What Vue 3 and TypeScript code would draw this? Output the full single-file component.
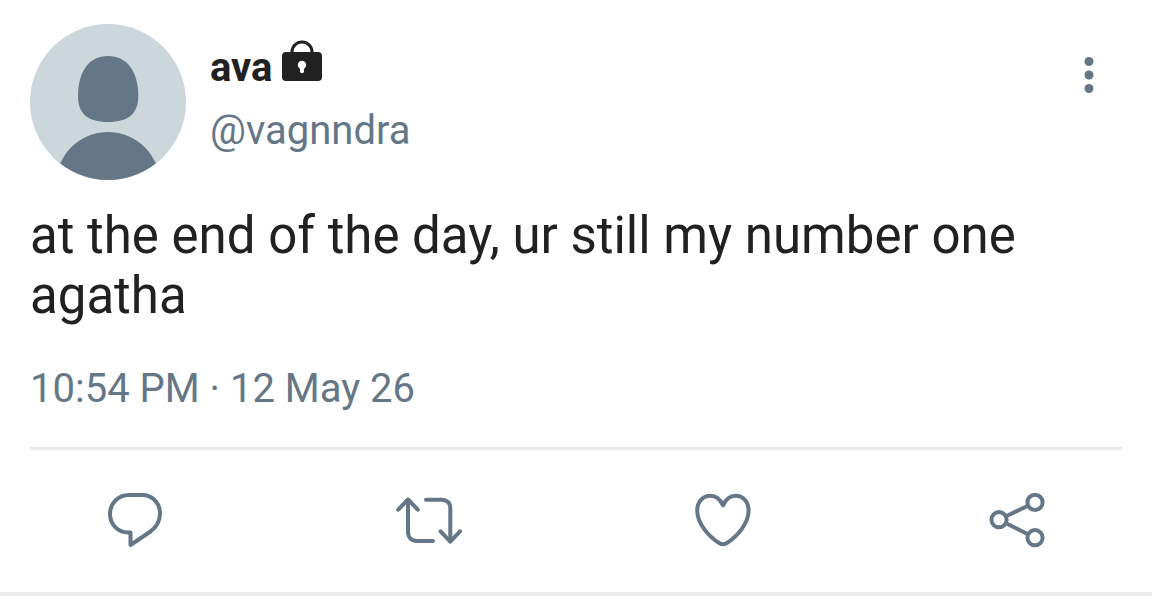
<script setup lang="ts">
interface Action {
  label: string
  paths: string[]
  circles?: { cx: number; cy: number; r: number }[]
}

const tweet = {
  name: 'ava',
  handle: '@vagnndra',
  text: 'at the end of the day, ur still my number one agatha',
  date: '10:54 PM · 12 May 26',
}

const actions: Action[] = [
  {
    label: 'Reply',
    paths: ['M27 8H40C50.500 8 58 16 58 26.500C58 34 54.500 40 48.500 44.500L28.500 58V45.500H26C16 45.500 8 37.500 8 27C8 16.500 16 8 27 8Z'],
  },
  {
    label: 'Retweet',
    paths: [
      'M2.200 22.700L12 12.500L21.800 22.700',
      'M12 13V45C12 50.500 15.500 54 21 54H37',
      'M30 12.700H45.500C51 12.700 54.300 16 54.300 21.500V54',
      'M44.600 44.300L54.300 54.600L64 44.300',
    ],
  },
  {
    label: 'Like',
    paths: ['M33 18.300C30 12 26 8.800 20.500 8.800C12.500 8.800 7.200 15 7.200 23.500C7.200 36 18 49 29.500 56.300Q33 58.300 36.500 56.300C48 49 58.600 36 58.600 23.500C58.600 15 53.300 8.800 45.500 8.800C40 8.800 36 12 33 18.300Z'],
  },
  {
    label: 'Share',
    paths: ['M22 29.300L44 18.700', 'M22 36.200L44 47.200'],
    circles: [
      { cx: 15, cy: 32.7, r: 7.6 },
      { cx: 51, cy: 15.4, r: 7.6 },
      { cx: 51, cy: 50.7, r: 7.6 },
    ],
  },
]
</script>

<template>
  <article class="tweet">
    <header class="head">
      <svg class="avatar" viewBox="0 0 156 156" role="img" aria-label="Default avatar">
        <defs>
          <clipPath id="disc"><circle cx="78" cy="78" r="78" /></clipPath>
        </defs>
        <g clip-path="url(#disc)">
          <rect width="156" height="156" fill="#ccd7db" />
          <path
            d="M78 32C98 32 108.300 49 108.300 72C108.300 89 99 98 78 98C57 98 48 89 48 72C48 49 58 32 78 32Z"
            fill="#657786"
          />
          <circle cx="78" cy="160" r="52" fill="#657786" />
        </g>
      </svg>
      <div class="author">
        <div class="name-row">
          <span class="name">{{ tweet.name }}</span>
          <svg class="lock" viewBox="0 0 40 42" role="img" aria-label="Protected account">
            <path d="M10 14V12A10 10 0 0 1 30 12V14" fill="none" stroke="#212121" stroke-width="3" />
            <rect y="12" width="40" height="29" rx="4" fill="#212121" />
            <circle cx="20" cy="25" r="4.200" fill="#fff" />
            <path d="M18 26H22V32Q20 34.500 18 32Z" fill="#fff" />
          </svg>
        </div>
        <a class="handle" href="#">{{ tweet.handle }}</a>
      </div>
      <button class="more" type="button" aria-label="More options">
        <svg viewBox="0 0 12 38">
          <circle cx="6" cy="5.500" r="4.500" />
          <circle cx="6" cy="19" r="4.500" />
          <circle cx="6" cy="32.500" r="4.500" />
        </svg>
      </button>
    </header>
    <p class="text">{{ tweet.text }}</p>
    <time class="date">{{ tweet.date }}</time>
    <div class="actions">
      <button v-for="action in actions" :key="action.label" type="button" :aria-label="action.label">
        <svg viewBox="0 0 66 66">
          <path v-for="d in action.paths" :key="d" :d="d" />
          <circle v-for="(c, i) in action.circles" :key="i" :cx="c.cx" :cy="c.cy" :r="c.r" />
        </svg>
      </button>
    </div>
  </article>
</template>

<style>
body {
  margin: 0;
  background: #fefefe;
}
</style>

<style scoped>
.tweet {
  padding: 24px 30px 0;
  border-bottom: 4px solid #ebebeb;
  color: #212121;
  font-family: Roboto, sans-serif;
}

.head {
  display: flex;
  align-items: flex-start;
  gap: 24px;
}

.avatar {
  flex: none;
  width: 156px;
  height: 156px;
}

.author {
  flex: 1;
  padding-top: 16px;
}

.name-row {
  display: flex;
  align-items: flex-start;
  gap: 10px;
}

.name {
  font-size: 40px;
  line-height: 56px;
  font-weight: 700;
}

.lock {
  width: 40px;
  height: 42px;
}

.handle {
  display: block;
  color: #657786;
  font-size: 40px;
  line-height: 70px;
  text-decoration: none;
}

button {
  display: block;
  padding: 0;
  border: 0;
  background: none;
  cursor: pointer;
}

.more {
  margin: 32px 27px 0 0;
}

.more svg {
  display: block;
  width: 12px;
  height: 38px;
  fill: #657786;
}

.text {
  margin: 26px 0 0;
  font-size: 51px;
  line-height: 60px;
}

.date {
  display: block;
  margin-top: 35px;
  color: #657786;
  font-size: 40px;
  line-height: 56px;
}

.actions {
  display: flex;
  justify-content: space-between;
  margin-top: 30px;
  padding: 37px 72px 39px;
  border-top: 3px solid #e9e9e9;
}

.actions svg {
  display: block;
  width: 66px;
  height: 66px;
  fill: none;
  stroke: #657786;
  stroke-width: 4;
  stroke-linecap: round;
  stroke-linejoin: round;
}
</style>
